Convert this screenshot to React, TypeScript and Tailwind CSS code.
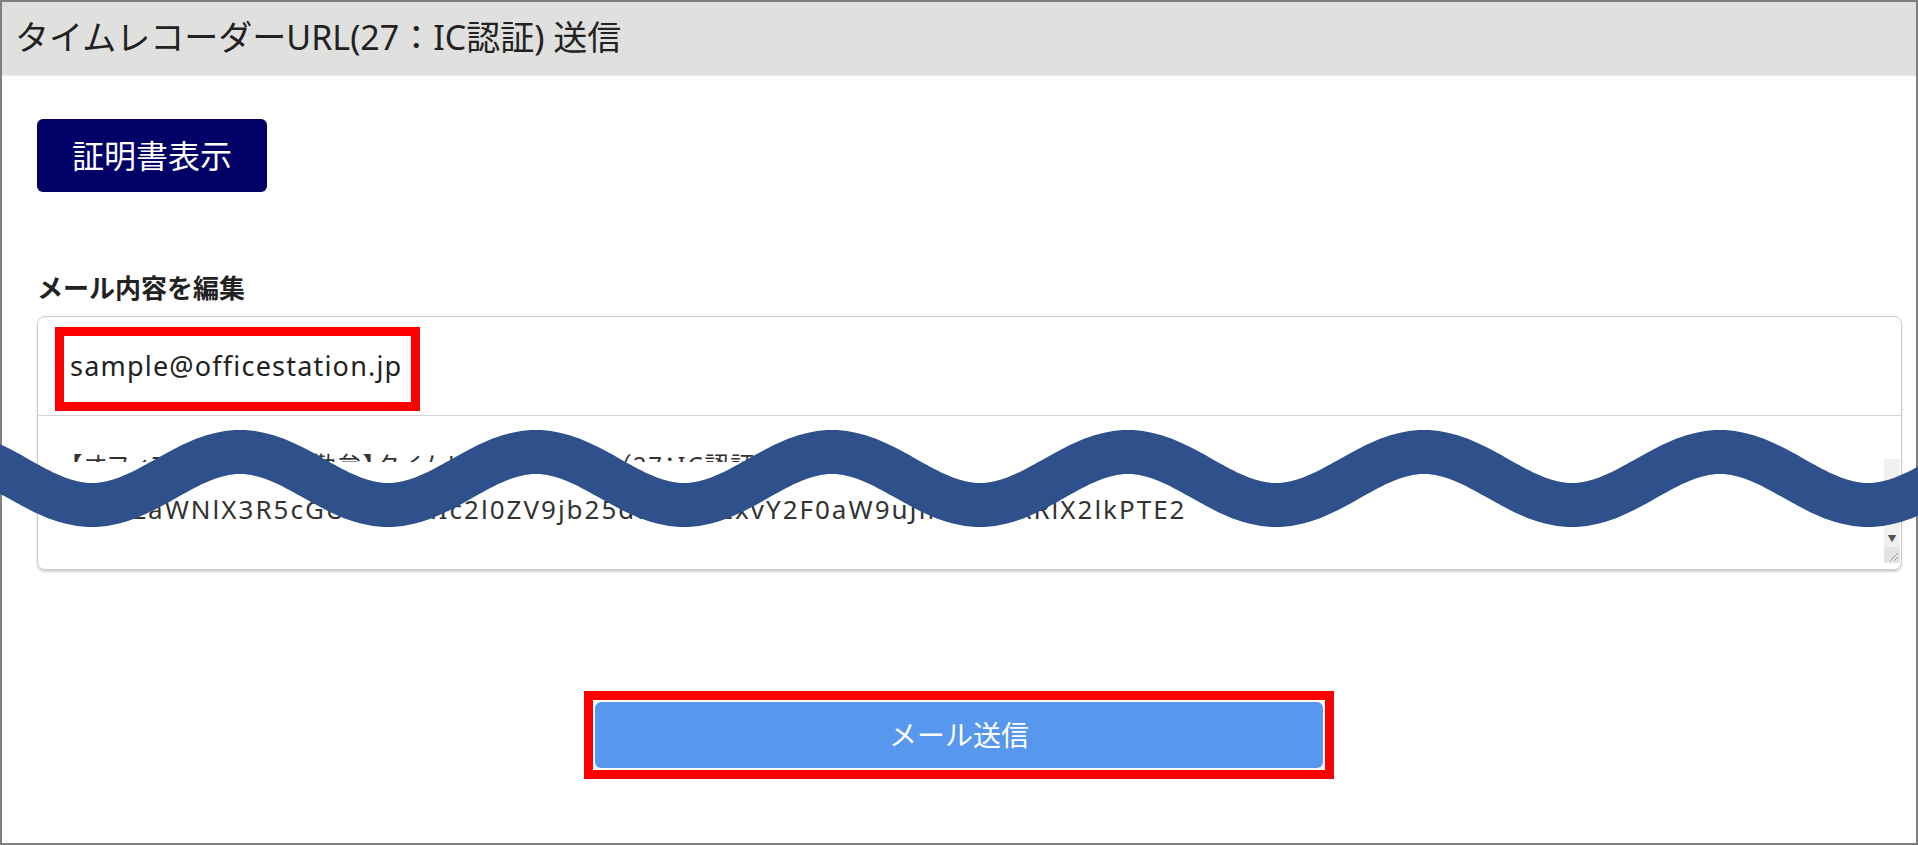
import React from 'react'

// sine wave drawn over the textarea (the "content omitted" mark)
function wavePath() {
  const pts: string[] = []
  for (let x = -40; x <= 1960; x += 4) {
    const y = 478.5 - 26.5 * Math.cos((2 * Math.PI * (x - 240)) / 296)
    pts.push(`${x},${y.toFixed(2)}`)
  }
  return 'M' + pts.join(' L')
}

export default function App() {
  return (
    <div className="relative h-[845px] w-full border-2 border-[#7f7f7f] bg-white font-['Noto_Sans','Noto_Sans_CJK_JP',sans-serif] text-[#222]">
      <header className="h-[74px] border-b border-[#ebebeb] bg-[#e0e0df] pl-[13px] pt-[12px] text-[34px] leading-[46px]">
        タイムレコーダーURL(27：IC認証) 送信
      </header>

      <div className="pl-[35px] pr-[14px]">
        <button className="mt-[43px] flex h-[73px] w-[230px] items-center justify-center rounded-[6px] bg-[#000066] text-[32px] text-white">
          証明書表示
        </button>

        <div className="mt-[80px] text-[26px] font-bold leading-[32px]">メール内容を編集</div>

        <div className="mt-[12px] rounded-[8px] border border-[#cccccc] shadow-[0_2px_2px_rgba(0,0,0,0.18)]">
          <div className="relative flex h-[99px] items-center border-b border-[#d4d4d4] pl-[32px] text-[27px] tracking-[1.2px]">
            sample@officestation.jp
            <div className="absolute left-[17px] top-[10px] h-[84px] w-[365px] border-[9px] border-[#ff0000]" />
          </div>
          <div className="flex h-[153px]">
            <div className="flex-1 whitespace-nowrap pl-[32px] pt-[27px] text-[26px] leading-[44px] text-[#333]">
              <div className="text-[24px] tracking-[1.8px] [font-feature-settings:'palt']">
                【オフィスステーション勤怠】タイムレコーダーURL（27：IC認証）
              </div>
              <div className="tracking-[2px]">dm9ZaWNlX3R5cGU9MjcmIc2l0ZV9jb25daWNX2xvY2F0aW9uJmRldmXRlX2lkPTE2</div>
            </div>
            <div className="mb-[6px] mr-[1px] mt-[43px] flex w-[16px] flex-col justify-end rounded-br-[6px] bg-[#f1f1f1]">
              <div className="flex h-[18px] items-center justify-center text-[9px] leading-none text-[#555]">▼</div>
              <div className="relative h-[16px] bg-[#e4e4e4]">
                <svg viewBox="0 0 16 16" className="absolute inset-0 h-full w-full">
                  <path d="M14 6 L6 14 M14 10 L10 14" stroke="#999" strokeWidth="1" />
                </svg>
              </div>
            </div>
          </div>
        </div>
      </div>

      <div className="mt-[121px] flex justify-center">
        <div className="border-[9px] border-[#ff0000] bg-white p-[2px]">
          <button className="flex h-[66px] w-[728px] items-center justify-center rounded-[6px] bg-[#5897ee] text-[28px] text-white">
            メール送信
          </button>
        </div>
      </div>

      <svg
        className="pointer-events-none absolute left-[-2px] top-[-2px] h-[845px] w-[1918px]"
        viewBox="0 0 1918 845"
      >
        <rect x="38" y="462" width="1843" height="28" fill="#ffffff" />
        <path d={wavePath()} fill="none" stroke="#2e518b" strokeWidth="44" />
      </svg>
    </div>
  )
}
